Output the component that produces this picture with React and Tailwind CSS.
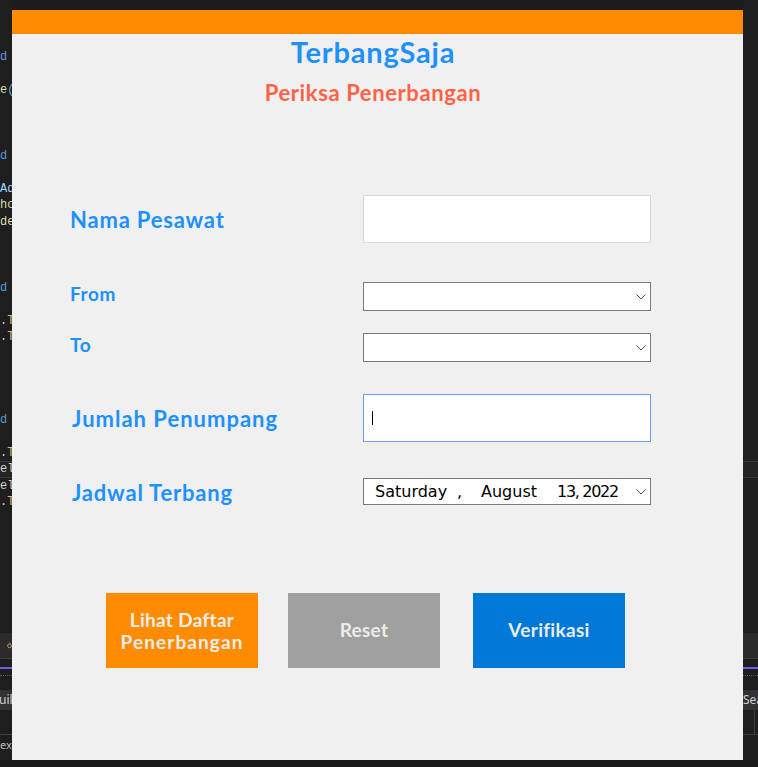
import React from "react";

const lines = [
  { k: 0, parts: [["d", "text-[#569cd6]"]] },
  { k: 2, parts: [["e", "text-[#dcdcaa]"], ["(", "text-[#569cd6]"]] },
  { k: 6, parts: [["d", "text-[#569cd6]"]] },
  { k: 8, parts: [["Ad", "text-[#9cdcfe]"]] },
  { k: 9, parts: [["ho", "text-[#dcdcaa]"]] },
  { k: 10, parts: [["de", "text-[#dcdcaa]"]] },
  { k: 14, parts: [["d", "text-[#569cd6]"]] },
  { k: 16, parts: [[".", "text-[#d4d4d4]"], ["T", "text-[#d7ba7d]"]] },
  { k: 17, parts: [[".", "text-[#d4d4d4]"], ["T", "text-[#d7ba7d]"]] },
  { k: 22, parts: [["d", "text-[#569cd6]"]] },
  { k: 24, parts: [[".", "text-[#d4d4d4]"], ["T", "text-[#d7ba7d]"]] },
  { k: 25, parts: [["el", "text-[#d4d4d4]"]] },
  { k: 26, parts: [["el", "text-[#d4d4d4]"]] },
  { k: 27, parts: [[".", "text-[#d4d4d4]"], ["T", "text-[#d7ba7d]"]] },
];

function CodeRows({ showText }) {
  const rows = [];
  for (let i = 0; i < 28; i++) {
    const l = lines.find((x) => x.k === i);
    rows.push(
      <div
        key={i}
        className={
          i === 25
            ? "h-[16.5px] leading-[14.5px] whitespace-nowrap bg-[#242424] border-y border-[#3a3a3a]"
            : "h-[16.5px] leading-[16.5px] whitespace-nowrap"
        }
      >
        {showText && l
          ? l.parts.map((p, j) => (
              <span key={j} className={p[1]}>
                {p[0]}
              </span>
            ))
          : null}
      </div>
    );
  }
  return (
    <div className="h-[633px] pt-[48.75px] flex flex-col font-['Liberation_Mono',monospace] text-[12px]">
      {rows}
    </div>
  );
}

function EditorStrip({ side }) {
  const left = side === "left";
  return (
    <div
      className={
        left
          ? "w-[12px] h-[767px] shrink-0 overflow-hidden flex flex-col bg-[#1e1e1e]"
          : "w-[15px] h-[767px] shrink-0 overflow-hidden flex flex-col bg-[#1e1e1e]"
      }
    >
      <CodeRows showText={left} />
      <div className="h-[26px] bg-[#2b2b2b] border-b border-[#3f3f3f] flex items-center pl-[7px]">
        {left ? (
          <svg width="8" height="9" viewBox="0 0 8 9">
            <circle cx="4" cy="5" r="3" fill="none" stroke="#c9a45c" strokeWidth="1.5" />
            <line x1="4" y1="0" x2="6" y2="2" stroke="#c9a45c" strokeWidth="1.2" />
          </svg>
        ) : null}
      </div>
      <div className="h-[8px]" />
      <div className="h-[2px] bg-[#6c5ce7]" />
      <div className="h-[6px]" />
      <div className="h-[2px] border-t border-dotted border-[#5c5c5c]" />
      <div className="h-[13px]" />
      <div className="h-[20px] bg-[#333333] text-[#d0d0d0] text-[12px] leading-[20px] whitespace-nowrap font-['Noto_Sans',sans-serif] flex">
        {left ? <span className="-ml-[1px]">uil</span> : <span>Sea</span>}
      </div>
      <div className="h-[24px] flex">
        {left ? null : <div className="ml-[11px] w-[1px] h-full bg-[#3f3f3f]" />}
      </div>
      <div className="h-[1px] bg-[#3f3f3f]" />
      <div className="flex-1 flex flex-col">
        <div className="h-[25px] text-[11px] leading-[20px] text-[#bdbdbd] whitespace-nowrap font-['Noto_Sans',sans-serif]">
          {left ? "exe" : ""}
        </div>
        <div className="flex-1 bg-[#1a1a1a]" />
      </div>
    </div>
  );
}

function Chevron() {
  return (
    <svg width="10" height="6" viewBox="0 0 10 6" className="shrink-0">
      <polyline points="0.5,0.5 5,5 9.5,0.5" fill="none" stroke="#5a5a5a" strokeWidth="1" />
    </svg>
  );
}

function Combo() {
  return (
    <div className="w-[288px] h-[29px] bg-white border border-[#7a7a7a] flex items-center justify-end pr-[4px]">
      <Chevron />
    </div>
  );
}

function Window() {
  return (
    <div className="w-[731px] h-[750px] bg-[#f0f0f0] flex flex-col font-['Lato',sans-serif]">
      <div className="h-[24px] bg-[#ff8c00] shrink-0" />
      <div className="h-[36px] leading-[36px] text-center pr-[9px] text-[29px] font-bold tracking-[0.8px] text-[#1e90ff]">
        TerbangSaja
      </div>
      <div className="mt-[8.5px] h-[28px] leading-[28px] text-center pr-[9px] text-[22px] font-bold tracking-[0.6px] text-[#ff6347]">
        Periksa Penerbangan
      </div>

      <div className="mt-[88.5px] flex flex-col pl-[58px]">
        <div className="flex items-center h-[48px]">
          <div className="w-[293px] text-[22px] font-bold tracking-[0.8px] text-[#1e90ff]">
            Nama Pesawat
          </div>
          <div className="w-[288px] h-[48px] bg-white border border-[#d9d9d9]" />
        </div>

        <div className="mt-[39px] flex items-center h-[29px]">
          <div className="w-[293px] pb-[4px] text-[19px] font-bold tracking-[0.6px] text-[#1e90ff]">
            From
          </div>
          <Combo />
        </div>

        <div className="mt-[22px] flex items-center h-[29px]">
          <div className="w-[293px] pb-[4px] text-[19px] font-bold tracking-[0.6px] text-[#1e90ff]">
            To
          </div>
          <Combo />
        </div>

        <div className="mt-[32px] flex items-center h-[48px]">
          <div className="w-[293px] pl-[2px] text-[22px] font-bold tracking-[1px] text-[#1e90ff]">
            Jumlah Penumpang
          </div>
          <div className="w-[288px] h-[48px] bg-white border border-[#6a9cf3] flex items-center pl-[8px]">
            <div className="w-[1px] h-[14px] bg-black" />
          </div>
        </div>

        <div className="mt-[36px] flex items-center h-[27px]">
          <div className="w-[293px] pl-[2px] pt-[2px] text-[22px] font-bold tracking-[0.8px] text-[#1e90ff]">
            Jadwal Terbang
          </div>
          <div className="w-[288px] h-[27px] bg-white border border-[#7a7a7a] flex items-center pl-[11px] pr-[4px] font-['DejaVu_Sans',sans-serif] text-[16px] text-black whitespace-nowrap">
            <span className="w-[82px]">Saturday</span>
            <span className="w-[24px]">,</span>
            <span className="w-[76px]">August</span>
            <span className="tracking-[-1.3px]">13, 2022</span>
            <span className="ml-auto flex">
              <Chevron />
            </span>
          </div>
        </div>
      </div>

      <div className="mt-[88px] flex pl-[94px]">
        <div className="w-[152px] h-[75px] bg-[#ff8c00] flex flex-col items-center justify-center text-center text-[19px] leading-[22px] font-bold text-[#ececec]">
          <span className="tracking-[0.3px]">Lihat Daftar</span>
          <span className="tracking-[1.1px]">Penerbangan</span>
        </div>
        <div className="ml-[30px] w-[152px] h-[75px] bg-[#a0a0a0] flex items-center justify-center text-[19px] font-bold tracking-[0.3px] text-[#ececec]">
          Reset
        </div>
        <div className="ml-[33px] w-[152px] h-[75px] bg-[#0078d7] flex items-center justify-center text-[19px] font-bold tracking-[0.3px] text-[#ececec]">
          Verifikasi
        </div>
      </div>
    </div>
  );
}

export default function App() {
  return (
    <div className="w-[758px] h-[767px] bg-[#1e1e1e] flex overflow-hidden">
      <EditorStrip side="left" />
      <div className="w-[731px] shrink-0 flex flex-col">
        <div className="h-[10px] bg-[#1c1c1c]" />
        <Window />
        <div className="h-[7px] bg-[#1a1a1a]" />
      </div>
      <EditorStrip side="right" />
    </div>
  );
}
